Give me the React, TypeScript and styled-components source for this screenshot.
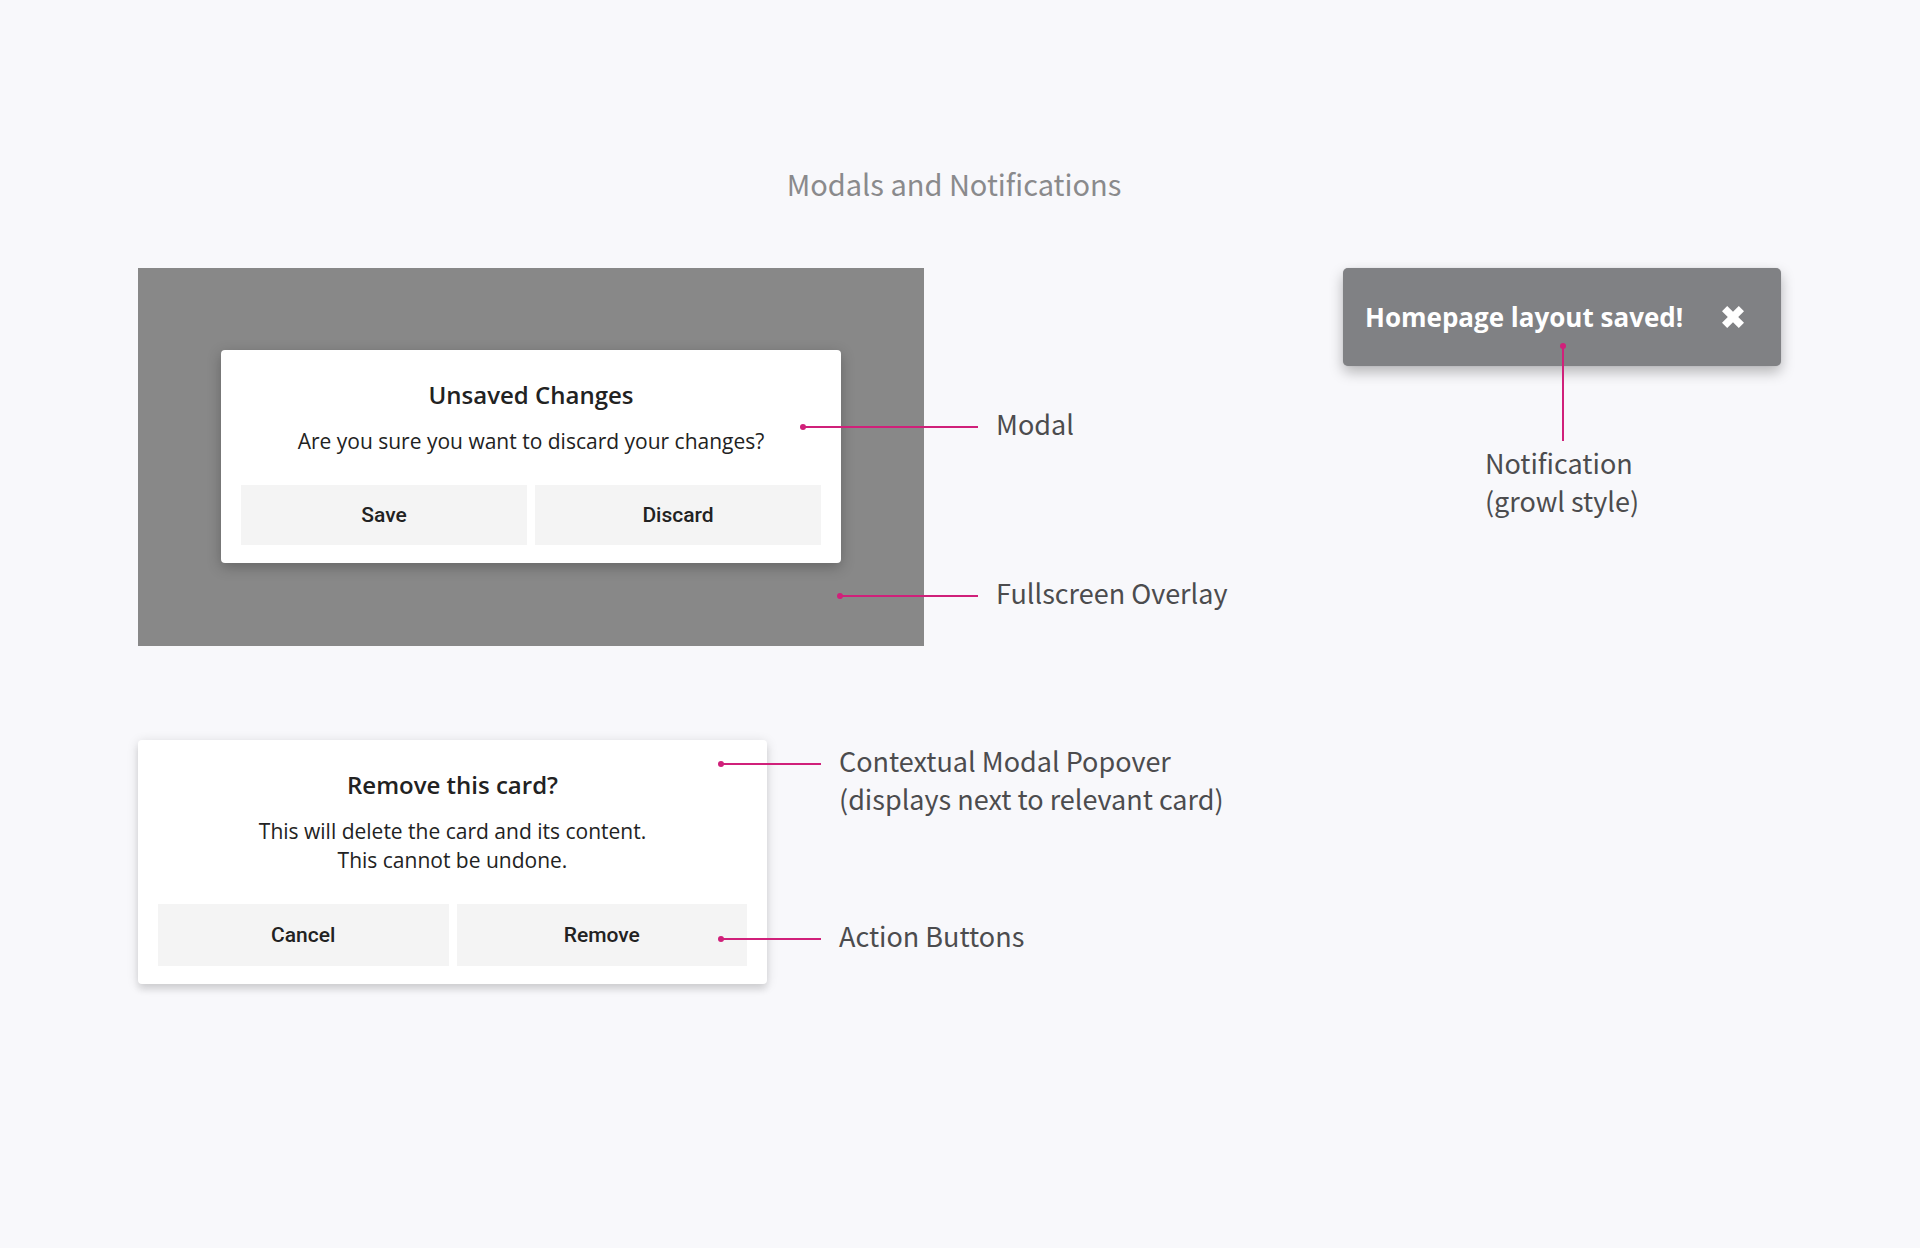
import React from 'react';
import styled, { createGlobalStyle } from 'styled-components';

const GlobalStyle = createGlobalStyle`
  *, *::before, *::after { box-sizing: border-box; }
  body {
    margin: 0;
    background: #f8f8fb;
    font-family: 'Open Sans', 'Noto Sans', sans-serif;
    color: #222222;
  }
  h1, h2, p { margin: 0; }
`;

const labelFont = `'Noto Sans CJK SC', 'Noto Sans', sans-serif`;
const accent = '#d0207a';

const Page = styled.div`
  min-height: 100vh;
`;

const Header = styled.header`
  padding: 163px 150px 65px 138px;
  text-align: center;
`;

const PageTitle = styled.h1`
  font: 400 29px/40px ${labelFont};
  color: #8a8a8c;
`;

const Board = styled.main`
  display: flex;
  justify-content: space-between;
  align-items: flex-start;
  gap: 40px;
  padding: 0 139px 80px 138px;
`;

const Dialogs = styled.div`
  flex: 1 1 auto;
  display: flex;
  flex-direction: column;
  gap: 94px;
  min-width: 0;
`;

const Example = styled.section`
  display: flex;
  align-items: flex-start;
  gap: 72px;
`;

const Overlay = styled.div`
  flex: 0 1 786px;
  display: flex;
  justify-content: center;
  padding: 82px 20px 83px;
  background: #888888;
`;

const Dialog = styled.div<{ $width: number; $floating?: boolean }>`
  flex: 0 1 ${(p) => p.$width}px;
  padding: 29px 20px 18px;
  border-radius: 4px;
  background: #ffffff;
  text-align: center;
  box-shadow: ${(p) =>
    p.$floating
      ? '0 6px 6px rgba(0, 0, 0, 0.08), 0 2px 12px rgba(0, 0, 0, 0.14)'
      : '0 4px 14px rgba(0, 0, 0, 0.26)'};
`;

const DialogTitle = styled.h2`
  font-size: 24px;
  line-height: 32px;
  font-weight: 600;
`;

const DialogText = styled.p`
  margin: 16px 0 29px;
  font-size: 21px;
  line-height: 29px;
`;

const Actions = styled.div`
  display: flex;
  gap: 8px;
`;

const ActionButton = styled.button<{ $tall?: boolean }>`
  flex: 1 1 0;
  height: ${(p) => (p.$tall ? 62 : 60)}px;
  padding: 0;
  border: 0;
  background: #f4f4f4;
  color: #222222;
  font: 500 21px/28px Roboto, sans-serif;
  cursor: pointer;
`;

const Callouts = styled.div<{ $gap: number; $top: number }>`
  display: flex;
  flex-direction: column;
  gap: ${(p) => p.$gap}px;
  padding-top: ${(p) => p.$top}px;
`;

const Callout = styled.p`
  position: relative;
  font: 400 27px/38px ${labelFont};
  color: #4c4c4e;
  white-space: nowrap;
`;

const Leader = styled.span<{ $length: number }>`
  position: absolute;
  top: 21px;
  right: calc(100% + 18px);
  width: ${(p) => p.$length}px;
  height: 2px;
  background: ${accent};

  &::before {
    content: '';
    position: absolute;
    left: -3px;
    top: -2px;
    width: 6px;
    height: 6px;
    border-radius: 50%;
    background: ${accent};
  }
`;

const RiserLeader = styled.span`
  position: absolute;
  left: 50%;
  bottom: calc(100% + 3px);
  width: 2px;
  height: 95px;
  background: ${accent};

  &::before {
    content: '';
    position: absolute;
    left: -2px;
    top: -3px;
    width: 6px;
    height: 6px;
    border-radius: 50%;
    background: ${accent};
  }
`;

const Notifications = styled.aside`
  flex: 0 0 438px;
  display: flex;
  flex-direction: column;
  align-items: center;
  gap: 78px;
`;

const Toast = styled.div`
  width: 100%;
  height: 98px;
  display: flex;
  align-items: center;
  justify-content: space-between;
  padding: 0 36px 0 22px;
  border-radius: 5px;
  background: #808184;
  color: #ffffff;
  box-shadow: 0 6px 14px rgba(0, 0, 0, 0.28), 0 0 1px rgba(0, 0, 0, 0.2);
`;

const ToastText = styled.p`
  font-size: 26px;
  line-height: 36px;
  font-weight: 700;
`;

const CloseButton = styled.button`
  display: flex;
  padding: 0;
  border: 0;
  background: none;
  color: inherit;
  cursor: pointer;
`;

function CloseIcon() {
  return (
    <svg width="24" height="24" viewBox="0 0 24 24" fill="currentColor" aria-hidden="true">
      <path d="M6.2 1 12 6.8 17.8 1 23 6.2 17.2 12 23 17.8 17.8 23 12 17.2 6.2 23 1 17.8 6.8 12 1 6.2Z" />
    </svg>
  );
}

export default function App() {
  return (
    <Page>
      <GlobalStyle />
      <Header>
        <PageTitle>Modals and Notifications</PageTitle>
      </Header>
      <Board>
        <Dialogs>
          <Example>
            <Overlay>
              <Dialog $width={620} role="dialog" aria-labelledby="unsaved-title">
                <DialogTitle id="unsaved-title">Unsaved Changes</DialogTitle>
                <DialogText>Are you sure you want to discard your changes?</DialogText>
                <Actions>
                  <ActionButton type="button">Save</ActionButton>
                  <ActionButton type="button">Discard</ActionButton>
                </Actions>
              </Dialog>
            </Overlay>
            <Callouts $gap={131} $top={137}>
              <Callout>
                <Leader $length={175} />
                Modal
              </Callout>
              <Callout>
                <Leader $length={138} />
                Fullscreen Overlay
              </Callout>
            </Callouts>
          </Example>
          <Example>
            <Dialog $width={629} $floating role="dialog" aria-labelledby="remove-title">
              <DialogTitle id="remove-title">Remove this card?</DialogTitle>
              <DialogText>
                This will delete the card and its content.
                <br />
                This cannot be undone.
              </DialogText>
              <Actions>
                <ActionButton type="button" $tall>Cancel</ActionButton>
                <ActionButton type="button" $tall>Remove</ActionButton>
              </Actions>
            </Dialog>
            <Callouts $gap={99} $top={2}>
              <Callout>
                <Leader $length={100} />
                Contextual Modal Popover
                <br />
                (displays next to relevant card)
              </Callout>
              <Callout>
                <Leader $length={100} />
                Action Buttons
              </Callout>
            </Callouts>
          </Example>
        </Dialogs>
        <Notifications>
          <Toast role="status">
            <ToastText>Homepage layout saved!</ToastText>
            <CloseButton type="button" aria-label="Close">
              <CloseIcon />
            </CloseButton>
          </Toast>
          <Callout>
            <RiserLeader />
            Notification
            <br />
            (growl style)
          </Callout>
        </Notifications>
      </Board>
    </Page>
  );
}
